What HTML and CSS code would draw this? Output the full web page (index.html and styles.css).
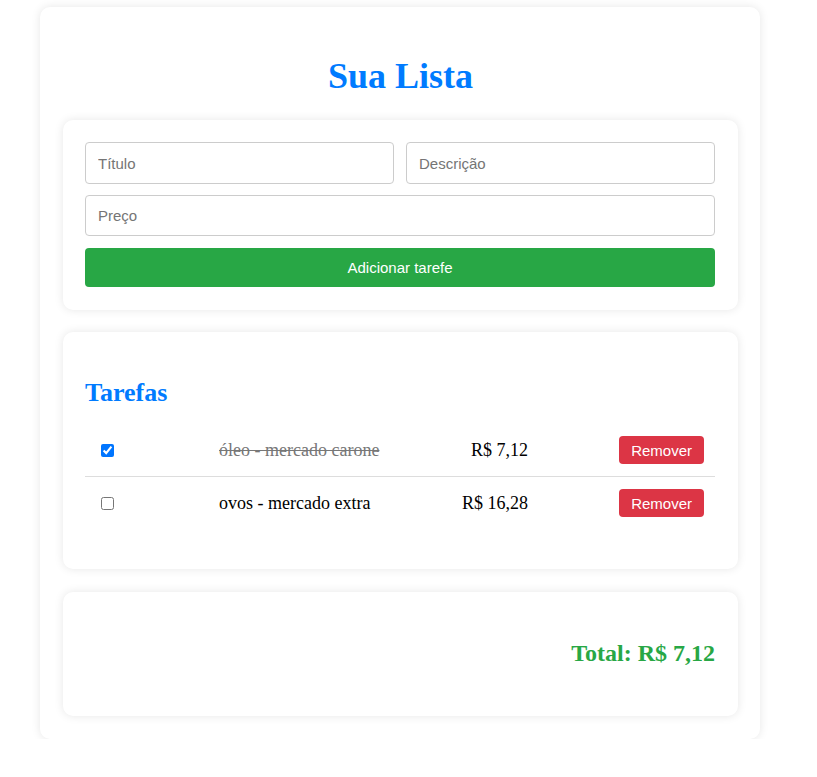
FILE: index.html
```html
<!DOCTYPE html>
<html lang="pt-BR">
<head>
<meta charset="utf-8">
<title>Sua Lista</title>
<link rel="stylesheet" href="styles.css">
</head>
<body>
<div class="container">
  <h1 class="title">Sua Lista</h1>
  <div class="card form-card">
    <div class="form-row">
      <input class="field field-half" type="text" placeholder="Título">
      <input class="field field-half" type="text" placeholder="Descrição">
    </div>
    <input class="field field-full" type="text" placeholder="Preço">
    <button class="btn-add">Adicionar tarefe</button>
  </div>
  <div class="card tasks-card">
    <h2 class="tasks-title">Tarefas</h2>
    <div class="task-list">
      <div class="task-row">
        <div class="cell cell-check"><input type="checkbox" checked></div>
        <div class="cell cell-name done">óleo - mercado carone</div>
        <div class="cell cell-price">R$ 7,12</div>
        <div class="cell cell-action"><button class="btn-remove">Remover</button></div>
      </div>
      <div class="task-row">
        <div class="cell cell-check"><input type="checkbox"></div>
        <div class="cell cell-name">ovos - mercado extra</div>
        <div class="cell cell-price">R$ 16,28</div>
        <div class="cell cell-action"><button class="btn-remove">Remover</button></div>
      </div>
    </div>
  </div>
  <div class="card total-card">
    <h2 class="total">Total: R$ 7,12</h2>
  </div>
</div>
</body>
</html>
```

FILE: styles.css
```css
html, body {
  margin: 0;
  padding: 0;
  background: #ffffff;
  font-family: "Liberation Serif", "Times New Roman", serif;
}

.container {
  width: 720px;
  box-sizing: border-box;
  margin: 7px 0 0 40px;
  padding: 0 22px 23px 23px;
  background: #fff;
  border-radius: 10px;
  box-shadow: 0 0 10px rgba(0, 0, 0, 0.1);
  display: flex;
  flex-direction: column;
  gap: 22px;
}

.title {
  margin: 49px 0 1px;
  text-align: center;
  font-size: 36px;
  line-height: 41px;
  font-weight: bold;
  color: #007bff;
}

.card {
  background: #fff;
  border-radius: 10px;
  box-shadow: 0 0 10px rgba(0, 0, 0, 0.1);
  padding: 22px 23px 22px 22px;
}

.form-card {
  display: flex;
  flex-direction: column;
  gap: 12px;
  padding-bottom: 23px;
}

.form-row {
  display: flex;
  gap: 12px;
  margin-bottom: -1px;
}

.field {
  box-sizing: border-box;
  height: 42px;
  margin: 0;
  padding: 0 12px;
  border: 1px solid #ccc;
  border-radius: 4px;
  font-family: "Liberation Sans", Arial, sans-serif;
  font-size: 15px;
  color: #333;
  outline: none;
}

.field-half {
  flex: 1 1 0;
  min-width: 0;
}

.field-full {
  flex: none;
  width: 100%;
  height: 41px;
}

.field::placeholder {
  color: #757575;
}

.btn-add {
  flex: none;
  height: 39px;
  border: none;
  border-radius: 4px;
  background: #28a745;
  color: #fff;
  font-family: "Liberation Sans", Arial, sans-serif;
  font-size: 15px;
}

.tasks-card {
  padding-bottom: 40px;
}

.tasks-title {
  margin: 24px 0 16px;
  font-size: 26px;
  line-height: 30px;
  font-weight: bold;
  color: #007bff;
}

.task-row {
  display: grid;
  grid-template-columns: 122px 1fr 110px 175px;
  align-items: center;
  height: 52px;
  font-size: 18px;
  color: #000;
}

.task-row + .task-row {
  border-top: 1px solid #ddd;
}

.cell {
  padding: 0 12px;
}

.cell-check {
  display: flex;
  align-items: center;
}

.cell-check input {
  margin: 0 0 0 4px;
  width: 13px;
  height: 13px;
}

.done {
  text-decoration: line-through;
  color: #777;
}

.cell-price {
  text-align: right;
}

.cell-action {
  display: flex;
  justify-content: flex-end;
  padding-right: 11px;
}

.btn-remove {
  height: 28px;
  padding: 0 12px;
  border: none;
  border-radius: 4px;
  background: #dc3545;
  color: #fff;
  font-family: "Liberation Sans", Arial, sans-serif;
  font-size: 15px;
}

.total-card {
  margin-top: 1px;
  padding: 47px 23px 49px 22px;
}

.total {
  margin: 0;
  text-align: right;
  font-size: 24px;
  line-height: 28px;
  font-weight: bold;
  color: #28a745;
}
```
